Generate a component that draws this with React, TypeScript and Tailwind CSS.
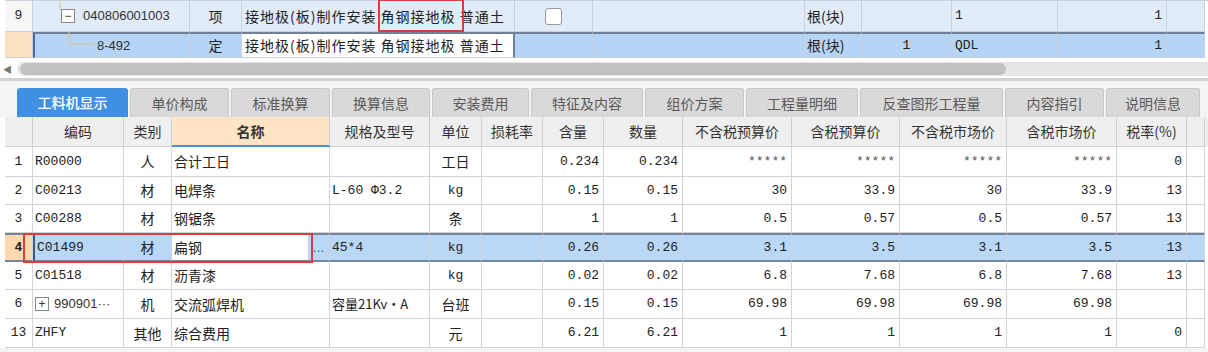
import React from "react";

// 列宽（下半部分工料机表格）
const GRID = "grid grid-cols-[28px_91px_48px_158px_100px_52px_61px_61px_79px_109px_108px_107px_110px_70px_18px]";
// 上半部分定额行
const TOP = "grid grid-cols-[28px_157px_52px_273px_78px_212px_57px_90px_106px_109px_38px]";

const mono = "font-['Liberation_Mono','Noto_Sans_CJK_SC',monospace] text-[13px]";

const tabs = [
    { name: "工料机显示", w: "w-[111px]" },
    { name: "单价构成", w: "w-[99px]" },
    { name: "标准换算", w: "w-[99px]" },
    { name: "换算信息", w: "w-[98px]" },
    { name: "安装费用", w: "w-[97px]" },
    { name: "特征及内容", w: "w-[112px]" },
    { name: "组价方案", w: "w-[99px]" },
    { name: "工程量明细", w: "w-[112px]" },
    { name: "反查图形工程量", w: "w-[143px]" },
    { name: "内容指引", w: "w-[99px]" },
    { name: "说明信息", w: "w-[94px]" },
];

const headers = ["", "编码", "类别", "名称", "规格及型号", "单位", "损耗率", "含量", "数量", "不含税预算价", "含税预算价", "不含税市场价", "含税市场价", "税率(%)", ""];

type Row = {
    no: string;
    code: string;
    type: string;
    name: string;
    spec: string;
    unit: string;
    nums: string[];
    h: string;
    expand?: boolean;
    current?: boolean;
};

const rows: Row[] = [
    { no: "1", code: "R00000", type: "人", name: "合计工日", spec: "", unit: "工日", nums: ["0.234", "0.234", "*****", "*****", "*****", "*****", "0"], h: "h-[30px]" },
    { no: "2", code: "C00213", type: "材", name: "电焊条", spec: "L-60 Φ3.2", unit: "kg", nums: ["0.15", "0.15", "30", "33.9", "30", "33.9", "13"], h: "h-[28px]" },
    { no: "3", code: "C00288", type: "材", name: "钢锯条", spec: "", unit: "条", nums: ["1", "1", "0.5", "0.57", "0.5", "0.57", "13"], h: "h-[28px]" },
    { no: "4", code: "C01499", type: "材", name: "扁钢", spec: "45*4", unit: "kg", nums: ["0.26", "0.26", "3.1", "3.5", "3.1", "3.5", "13"], h: "h-[29px]", current: true },
    { no: "5", code: "C01518", type: "材", name: "沥青漆", spec: "", unit: "kg", nums: ["0.02", "0.02", "6.8", "7.68", "6.8", "7.68", "13"], h: "h-[28px]" },
    { no: "6", code: "990901···", type: "机", name: "交流弧焊机", spec: "容量21Kv·A", unit: "台班", nums: ["0.15", "0.15", "69.98", "69.98", "69.98", "69.98", ""], h: "h-[29px]", expand: true },
    { no: "13", code: "ZHFY", type: "其他", name: "综合费用", spec: "", unit: "元", nums: ["6.21", "6.21", "1", "1", "1", "1", "0"], h: "h-[29px]" },
];

const TreeBox = ({ sign }: { sign: string }) => (
    <span className="inline-flex w-[14px] h-[14px] items-center justify-center border border-[#8a8a8a] bg-white text-[12px] leading-none text-[#333] font-['Liberation_Sans',sans-serif]">
        {sign}
    </span>
);

function DataRow({ r }: { r: Row }) {
    const cur = r.current;
    const cell = `flex items-center border-r border-b border-[#d4d4d4] ${cur ? "border-t-2 border-t-[#74859c] border-b-2 border-b-[#74859c]" : ""}`;
    const bg = cur ? "bg-[#b9d7f7]" : "bg-white";
    return (
        <div className={`${GRID} ${r.h}`}>
            <div className={`${cell} justify-center ${cur ? "bg-[#fcd9ae] font-bold" : "bg-white"} ${mono}`}>{r.no}</div>
            <div className={`${cell} ${bg} pl-[2px] gap-[5px] ${cur ? "border-l-2 border-l-[#3a5a8c]" : ""}`}>
                {r.expand && <TreeBox sign="+" />}
                <span className={r.expand ? "font-['Liberation_Sans',sans-serif] text-[13px] text-[#333]" : mono}>{r.code}</span>
            </div>
            <div className={`${cell} ${bg} justify-center`}>{r.type}</div>
            {cur ? (
                <div className={`${cell} ${bg} overflow-hidden`}>
                    <div className="w-[136px] h-full bg-white flex items-center pl-[2px]">{r.name}</div>
                    <span className="w-[21px] text-center text-[#555] text-[12px] font-['Liberation_Sans',sans-serif]">…</span>
                </div>
            ) : (
                <div className={`${cell} ${bg} pl-[2px]`}>{r.name}</div>
            )}
            <div className={`${cell} ${bg} pl-[2px] ${r.spec.startsWith("容量") ? "text-[13px]" : mono} whitespace-nowrap overflow-hidden`}>{r.spec}</div>
            <div className={`${cell} ${bg} justify-center ${r.unit === "kg" ? mono : ""}`}>{r.unit}</div>
            <div className={`${cell} ${bg}`}></div>
            {r.nums.map((n, i) => (
                <div key={i} className={`${cell} ${bg} justify-end pr-[4px] ${mono} ${n === "*****" ? "text-[#555] text-[11px]" : ""}`}>
                    {n}
                </div>
            ))}
            <div className={`${cell} ${bg}`}></div>
        </div>
    );
}

export default function App() {
    const topCell = "flex items-center border-r border-b border-[#c9d3e0]";
    const dk = "border-t-2 border-t-[#6f8097]";
    return (
        <div className="relative w-[1208px] h-[352px] overflow-hidden bg-[#f4f4f4] font-['Noto_Sans_CJK_SC',sans-serif] text-[14px] text-[#222]">
            {/* 上方定额行 */}
            <div className="pl-[5px] bg-white">
                <div className={`${TOP} h-[32px] border-t border-[#c9d3e0]`}>
                    <div className={`${topCell} justify-center bg-[#f7f7f7] ${mono}`}>9</div>
                    <div className={`${topCell} bg-[#e2ebf8] relative pl-[28px] gap-[8px]`}>
                        <svg className="absolute left-[22px] top-0" width="10" height="32">
                            <line x1="5" y1="0" x2="5" y2="9" stroke="#d9c48f" strokeWidth="1" />
                        </svg>
                        <TreeBox sign="−" />
                        <span className="font-['Liberation_Sans',sans-serif] text-[13px] text-[#333]">040806001003</span>
                    </div>
                    <div className={`${topCell} bg-[#e2ebf8] justify-center`}>项</div>
                    <div className={`${topCell} bg-[#e2ebf8] pl-[3px] whitespace-nowrap tracking-[1px]`}>接地极(板)制作安装 角钢接地极 普通土</div>
                    <div className={`${topCell} bg-[#e2ebf8] justify-center`}>
                        <span className="w-[17px] h-[17px] rounded-[3px] border border-[#9a9a9a] bg-white"></span>
                    </div>
                    <div className={`${topCell} bg-[#e2ebf8]`}></div>
                    <div className={`${topCell} bg-[#e2ebf8] pl-[2px]`}>根(块)</div>
                    <div className={`${topCell} bg-[#e2ebf8]`}></div>
                    <div className={`${topCell} bg-[#e2ebf8] pl-[3px] ${mono}`}>1</div>
                    <div className={`${topCell} bg-[#e2ebf8] justify-end pr-[4px] ${mono}`}>1</div>
                    <div className={`${topCell} bg-[#e2ebf8]`}></div>
                </div>
                <div className={`${TOP} h-[26px]`}>
                    <div className={`${topCell} bg-[#fbe1c2]`}></div>
                    <div className={`${topCell} bg-[#b6d5f6] relative pl-[62px] ${dk} border-l-2 border-l-[#4b6a96]`}>
                        <svg className="absolute left-[32px] top-[-2px]" width="30" height="26">
                            <line x1="2" y1="0" x2="2" y2="12" stroke="#d9c48f" strokeWidth="1" />
                            <line x1="2" y1="12" x2="28" y2="12" stroke="#d9c48f" strokeWidth="1" />
                        </svg>
                        <span className="font-['Liberation_Sans',sans-serif] text-[13px] text-[#333]">8-492</span>
                    </div>
                    <div className={`${topCell} bg-[#b6d5f6] justify-center ${dk}`}>定</div>
                    <div className={`${topCell} bg-white pl-[3px] whitespace-nowrap tracking-[1px] ${dk} border-r-2 border-r-[#6f8097]`}>接地极(板)制作安装 角钢接地极 普通土</div>
                    <div className={`${topCell} bg-[#b6d5f6] ${dk}`}></div>
                    <div className={`${topCell} bg-[#b6d5f6] ${dk}`}></div>
                    <div className={`${topCell} bg-[#b6d5f6] pl-[2px] ${dk}`}>根(块)</div>
                    <div className={`${topCell} bg-[#b6d5f6] justify-center ${dk} ${mono}`}>1</div>
                    <div className={`${topCell} bg-[#b6d5f6] pl-[3px] ${dk} ${mono}`}>QDL</div>
                    <div className={`${topCell} bg-[#b6d5f6] justify-end pr-[4px] ${dk} ${mono}`}>1</div>
                    <div className={`${topCell} bg-[#b6d5f6] ${dk}`}></div>
                </div>
                <div className="h-[4px]"></div>
            </div>

            {/* 横向滚动条 */}
            <div className="flex items-center h-[14px] bg-white pl-[3px]">
                <span className="w-[14px] text-[9px] leading-none text-[#777]">◀</span>
                <div className="flex-1 h-[14px] bg-[#e6e6e6] rounded-l-[7px] flex items-center pl-[3px]">
                    <div className="w-[986px] h-[12px] rounded-full bg-[#c2c2c2]"></div>
                </div>
            </div>
            <div className="h-[2px] bg-white"></div>
            <div className="h-[3px] bg-[#d3d3d3]"></div>
            <div className="h-[7px] bg-[#f4f4f4]"></div>

            {/* 页签 */}
            <div className="flex gap-[2px] pl-[17px] h-[29px] items-end">
                {tabs.map((t, i) => (
                    <div
                        key={t.name}
                        className={`${t.w} h-[29px] flex items-center justify-center rounded-t-[3px] text-[14px] ${
                            i === 0 ? "bg-[#3f8fe3] text-white font-medium" : "bg-[#d9d9d9] text-[#5a5a5a] border border-b-0 border-[#c8c8c8]"
                        }`}
                    >
                        {t.name}
                    </div>
                ))}
            </div>

            {/* 工料机表格 */}
            <div className="pl-[5px] bg-white">
                <div className={`${GRID} h-[30px] bg-[#efefef]`}>
                    {headers.map((h, i) => (
                        <div
                            key={i}
                            className={`flex items-center justify-center border-r border-b border-[#d0d0d0] text-[#333] whitespace-nowrap ${
                                i === 3 ? "bg-[#fde5c6] font-bold border-b-2 border-b-[#4d8fdc]" : ""
                            }`}
                        >
                            {h}
                        </div>
                    ))}
                </div>
                {rows.map((r) => (
                    <DataRow key={r.no} r={r} />
                ))}
            </div>

            {/* 红色标注框 */}
            <div className="absolute left-[378px] top-[-1px] w-[86px] h-[33px] border-2 border-[#e2393f]"></div>
            <div className="absolute left-[23px] top-[233px] w-[290px] h-[30px] border-2 border-[#e2393f]"></div>
        </div>
    );
}
